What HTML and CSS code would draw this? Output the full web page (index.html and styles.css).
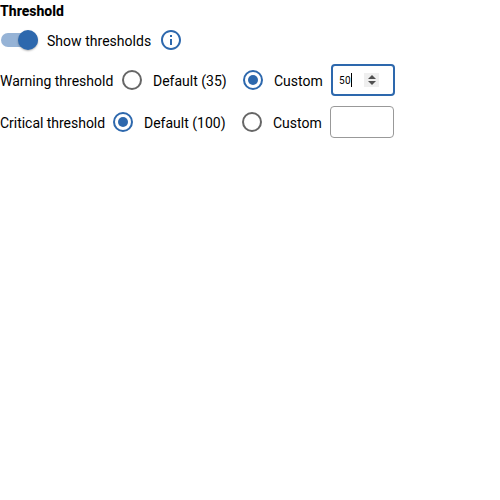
FILE: index.html
```
<!DOCTYPE html>
<html lang="en">
<head>
<meta charset="utf-8">
<title>Threshold</title>
<link rel="stylesheet" href="styles.css">
</head>
<body>
<h1 class="title">Threshold</h1>
<div class="toggle-row">
  <span class="switch"><span class="thumb"></span></span>
  <span class="switch-label">Show thresholds</span>
  <svg class="info" viewBox="0 0 24 24"><path fill="currentColor" d="M11 7h2v2h-2zm0 4h2v6h-2zm1-9C6.480 2 2 6.480 2 12s4.480 10 10 10 10-4.480 10-10S17.520 2 12 2zm0 18c-4.410 0-8-3.590-8-8s3.590-8 8-8 8 3.590 8 8-3.590 8-8 8z"/></svg>
</div>
<div class="row warning">
  <span class="name">Warning threshold</span>
  <span class="radio"></span><span class="default">Default (35)</span>
  <span class="radio checked"></span><span class="custom">Custom</span>
  <span class="field focused"><span class="value">50</span><span class="caret"></span><span class="spinner"><svg viewBox="0 0 8 10"><path d="M0 4L4 0L8 4ZM0 6L4 10L8 6Z" fill="#505050"/></svg></span></span>
</div>
<div class="row critical">
  <span class="name">Critical threshold</span>
  <span class="radio checked"></span><span class="default">Default (100)</span>
  <span class="radio"></span><span class="custom">Custom</span>
  <span class="field"></span>
</div>
</body>
</html>
```
FILE: styles.css
```
body { margin: 0; background: #fff; color: #000; font: 14px/20px Roboto, sans-serif; }
.title { margin: 0; font-size: 14px; line-height: 22px; font-weight: 800; }
.toggle-row { display: flex; align-items: center; height: 36px; margin-bottom: 1px; white-space: nowrap; }
.switch { display: flex; justify-content: flex-end; align-items: center; width: 37px; height: 14px; margin-left: 1px; border-radius: 7px; background: #96b3d6; }
.thumb { width: 20px; height: 20px; flex: none; border-radius: 50%; background: #2d68ad; box-shadow: 0 1px 2px rgba(0, 0, 0, 0.3); }
.switch-label { margin-left: 9px; padding-top: 2px; width: 104px; letter-spacing: 0.03px; }
.info { width: 24px; height: 24px; margin-left: 8px; color: #2d68ad; }
.row { display: flex; align-items: center; height: 42px; white-space: nowrap; }
.name, .default, .custom { padding-top: 2px; }
.warning .name { width: 114px; }
.critical .name { width: 105px; letter-spacing: -0.03px; }
.radio { box-sizing: border-box; display: flex; flex: none; align-items: center; justify-content: center; width: 20px; height: 20px; margin-left: 8px; border: 2px solid #666; border-radius: 50%; }
.checked { border-color: #2d68ad; }
.checked::after { content: ""; width: 10px; height: 10px; border-radius: 50%; background: #2d68ad; }
.default { margin-left: 11px; }
.warning .default { width: 82px; }
.critical .default { width: 90px; }
.custom { width: 49px; margin: 0 8px 0 11px; }
.field { box-sizing: border-box; display: flex; align-items: center; width: 64px; height: 32px; padding: 0 7px; border: 1px solid #999; border-radius: 4px; font-size: 10px; }
.focused { border: 2px solid #2d68ad; padding: 0 14px 0 6px; }
.value { width: 12px; letter-spacing: 0.4px; padding-top: 1px; }
.caret { width: 1px; height: 14px; background: #000; }
.spinner { display: flex; align-items: center; justify-content: center; width: 15px; height: 14px; margin-left: auto; background: #efefef; }
.spinner svg { width: 8px; height: 10px; }
```
